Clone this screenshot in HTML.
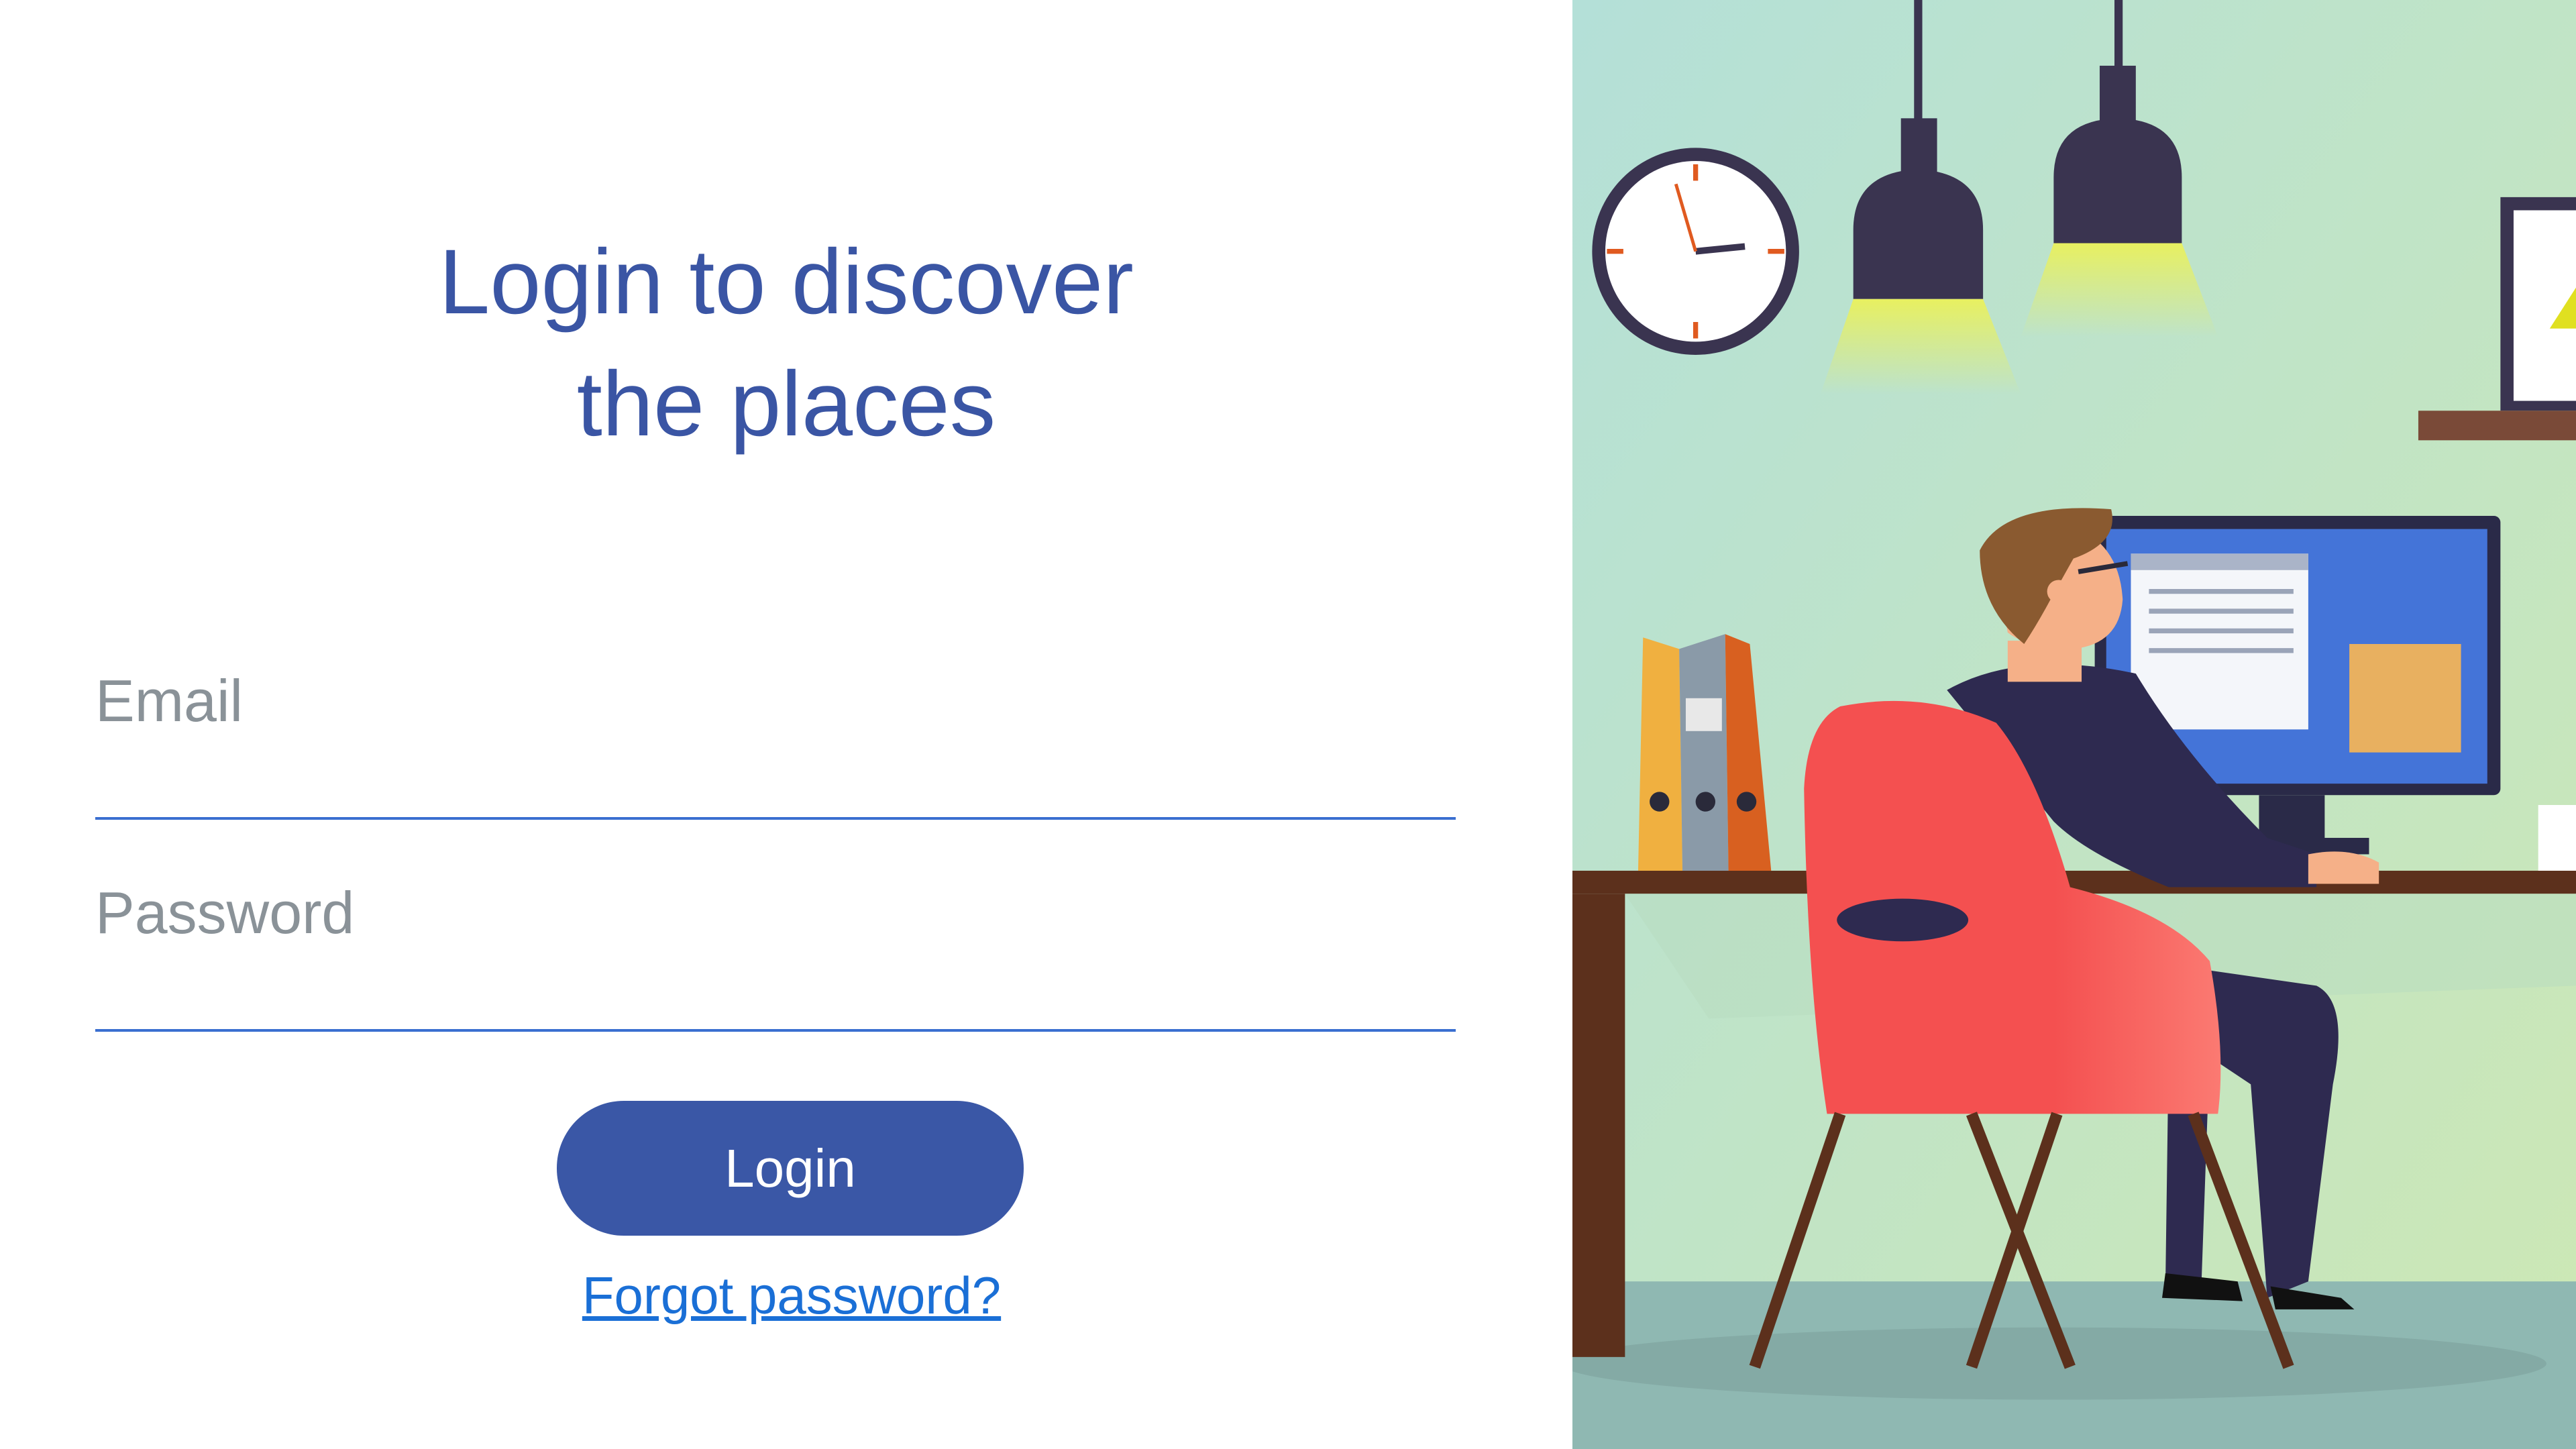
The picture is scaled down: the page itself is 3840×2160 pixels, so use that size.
<!DOCTYPE html>
<html><head><meta charset="utf-8"><style>
html,body{margin:0;padding:0}
body{width:3840px;height:2160px;position:relative;overflow:hidden;background:#fff;font-family:"Liberation Sans",sans-serif}
.title{position:absolute;left:0;width:2344px;top:330px;text-align:center;color:#3a55a4;font-size:137px;line-height:182px}
.lbl{position:absolute;left:142px;color:#8a9298;font-size:88px}
.line{position:absolute;left:142px;width:2028px;height:4px;background:#3a6fd0}
.btn{position:absolute;left:830px;top:1641px;width:696px;height:201px;border-radius:100px;background:#3a57a6;color:#fff;font-size:80px;text-align:center;line-height:201px}
.fp{position:absolute;left:0;width:2360px;top:1886px;text-align:center;color:#1a6fd6;font-size:78px;text-decoration:underline}
svg{position:absolute;left:2344px;top:0}
</style></head><body>
<div class="title">Login to discover<br>the places</div>
<div class="lbl" style="top:994px">Email</div>
<div class="line" style="top:1218px"></div>
<div class="lbl" style="top:1310px">Password</div>
<div class="line" style="top:1534px"></div>
<div class="btn">Login</div>
<div class="fp">Forgot password?</div>
<svg width="1496" height="2160" viewBox="957 0 611 882" preserveAspectRatio="none">
<defs>
<linearGradient id="bg" x1="0" y1="0" x2="1" y2="1"><stop offset="0" stop-color="#b4e0d8"/><stop offset="1" stop-color="#cde8b4"/></linearGradient>
<linearGradient id="lt" x1="0" y1="0" x2="0" y2="1"><stop offset="0" stop-color="#e8f060"/><stop offset="1" stop-color="#e8f060" stop-opacity="0"/></linearGradient>
<linearGradient id="ch" x1="0" y1="0" x2="1" y2="0"><stop offset="0" stop-color="#f45050"/><stop offset="0.6" stop-color="#f45050"/><stop offset="1" stop-color="#fb7a72"/></linearGradient>
</defs>
<rect x="957" y="0" width="611" height="882" fill="url(#bg)"/>
<rect x="957" y="780" width="611" height="102" fill="#8fb8b2"/>
<ellipse cx="1250" cy="830" rx="300" ry="22" fill="#84aaa5"/>
<circle cx="1032" cy="153" r="63" fill="#3a3450"/>
<circle cx="1032" cy="153" r="55" fill="#fff"/>
<g stroke="#e05a20" stroke-width="3"><line x1="1032" y1="100" x2="1032" y2="110"/><line x1="1032" y1="196" x2="1032" y2="206"/><line x1="978" y1="153" x2="988" y2="153"/><line x1="1076" y1="153" x2="1086" y2="153"/></g>
<line x1="1032" y1="153" x2="1062" y2="150" stroke="#3a3450" stroke-width="4"/>
<line x1="1032" y1="153" x2="1020" y2="112" stroke="#e05a20" stroke-width="2"/>
<rect x="1165" y="0" width="5" height="75" fill="#3a3450"/>
<rect x="1157" y="72" width="22" height="35" fill="#3a3450"/>
<path d="M1128 182 L1128 140 Q1128 105 1167 103 Q1207 105 1207 140 L1207 182Z" fill="#3a3450"/>
<path d="M1128 182 L1207 182 L1230 240 L1108 240Z" fill="url(#lt)"/>
<rect x="1287" y="0" width="5" height="45" fill="#3a3450"/>
<rect x="1278" y="40" width="22" height="35" fill="#3a3450"/>
<path d="M1250 148 L1250 108 Q1250 73 1289 72 Q1328 73 1328 108 L1328 148Z" fill="#3a3450"/>
<path d="M1250 148 L1328 148 L1350 205 L1230 205Z" fill="url(#lt)"/>
<rect x="1522" y="120" width="60" height="130" fill="#3a3450"/><rect x="1530" y="128" width="50" height="116" fill="#fff"/>
<path d="M1552 200 L1568 175 L1568 200Z" fill="#e0e020"/>
<rect x="1472" y="250" width="96" height="18" fill="#7a4a38"/>
<rect x="957" y="530" width="611" height="14" fill="#5c301c"/>
<rect x="957" y="544" width="32" height="282" fill="#5c301c"/>
<path d="M989 544 L1568 544 L1568 600 L1040 620Z" fill="#b8dcc0" opacity="0.5"/>
<path d="M1000 388 L1022 395 L1024 530 L997 530Z" fill="#f0b040"/>
<path d="M1022 395 L1050 386 L1052 530 L1024 530Z" fill="#8a9aa8"/>
<path d="M1050 386 L1065 392 L1078 530 L1052 530Z" fill="#d86020"/>
<rect x="1026" y="425" width="22" height="20" fill="#e8e8e8"/>
<circle cx="1010" cy="488" r="6" fill="#2a2a3a"/><circle cx="1038" cy="488" r="6" fill="#2a2a3a"/><circle cx="1063" cy="488" r="6" fill="#2a2a3a"/>
<rect x="1275" y="314" width="247" height="170" rx="4" fill="#2a2a48"/>
<rect x="1282" y="322" width="232" height="155" fill="#4474d8"/>
<rect x="1297" y="337" width="108" height="107" fill="#f4f6fa"/><rect x="1297" y="337" width="108" height="10" fill="#aab4c8"/>
<g stroke="#9aa4b8" stroke-width="3"><line x1="1308" y1="360" x2="1396" y2="360"/><line x1="1308" y1="372" x2="1396" y2="372"/><line x1="1308" y1="384" x2="1396" y2="384"/><line x1="1308" y1="396" x2="1396" y2="396"/></g>
<rect x="1430" y="392" width="68" height="66" fill="#e8b060"/>
<rect x="1375" y="484" width="40" height="30" fill="#2a2a48"/><rect x="1350" y="510" width="92" height="10" fill="#2a2a48"/>
<rect x="1545" y="490" width="23" height="40" fill="#fff"/>
<path d="M1185 420 Q1230 395 1300 410 Q1330 460 1380 510 L1410 520 L1410 540 L1320 540 Q1270 520 1250 500Z" fill="#2e2a50"/>
<path d="M1405 520 Q1430 515 1448 525 L1448 538 L1405 538Z" fill="#f5b088"/>
<path d="M1340 590 L1410 600 Q1430 610 1420 660 L1405 780 L1380 790 L1370 660 L1340 640Z" fill="#2e2a50"/>
<path d="M1320 640 L1345 640 L1340 780 L1318 785Z" fill="#2e2a50"/>
<path d="M1318 775 L1362 780 L1365 792 L1316 790Z" fill="#111"/><path d="M1382 783 L1425 790 L1433 797 L1385 797Z" fill="#111"/>
<rect x="1222" y="390" width="45" height="25" fill="#f5b088"/>
<path d="M1215 345 Q1225 315 1260 320 Q1290 330 1292 365 Q1290 392 1262 395 Q1235 395 1222 385Z" fill="#f5b088"/>
<path d="M1205 335 Q1220 305 1285 310 Q1290 330 1262 340 L1248 365 Q1240 380 1232 392 Q1205 370 1205 335Z" fill="#8a5a30"/>
<circle cx="1253" cy="360" r="7" fill="#f5b088"/>
<path d="M1265 348 L1295 343" stroke="#2a2a3a" stroke-width="3"/>
<path d="M1120 430 Q1170 420 1215 440 Q1240 470 1260 540 Q1320 555 1345 585 Q1355 640 1350 678 L1112 678 Q1100 600 1098 480 Q1100 440 1120 430Z" fill="url(#ch)"/>
<ellipse cx="1158" cy="560" rx="40" ry="13" fill="#2e2a50"/>
<g stroke="#5c301c" stroke-width="7"><line x1="1120" y1="678" x2="1068" y2="832"/><line x1="1200" y1="678" x2="1260" y2="832"/><line x1="1252" y1="678" x2="1200" y2="832"/><line x1="1335" y1="678" x2="1393" y2="832"/></g>
</svg>
</body></html>
